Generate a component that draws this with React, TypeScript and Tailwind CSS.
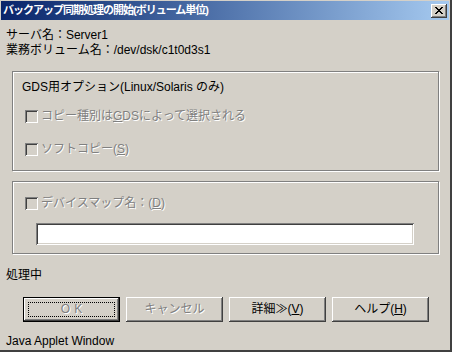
import React from 'react';

const FONT = { fontFamily: '"Liberation Sans", "Noto Sans CJK JP", sans-serif' };

const disabledText = 'text-[#808080] [text-shadow:1px_1px_0_#ffffff]';

const raised =
  'bg-[#d4d0c8] shadow-[inset_-1px_-1px_0_#404040,inset_1px_1px_0_#ffffff,inset_-2px_-2px_0_#808080,inset_2px_2px_0_#d4d0c8]';

const sunken =
  'shadow-[inset_1px_1px_0_#808080,inset_-1px_-1px_0_#ffffff,inset_2px_2px_0_#404040,inset_-2px_-2px_0_#d4d0c8]';

const CheckRow: React.FC<{ children: React.ReactNode }> = ({ children }) => (
  <div className="flex items-center h-[13px] gap-[3px]">
    <span className={`w-[13px] h-[13px] bg-[#d4d0c8] ${sunken}`} />
    <span className={`text-[12px] leading-[15px] ${disabledText}`}>{children}</span>
  </div>
);

const GroupBox: React.FC<{ className?: string; children: React.ReactNode }> = ({ className, children }) => (
  <div
    className={`ml-[6px] w-[427px] border border-[#808080] shadow-[1px_1px_0_#ffffff,inset_1px_1px_0_#ffffff] ${className ?? ''}`}
  >
    {children}
  </div>
);

const Button: React.FC<{ children: React.ReactNode; disabled?: boolean; isDefault?: boolean }> = ({
  children,
  disabled,
  isDefault,
}) => (
  <div
    className={`w-[97px] h-[25px] ${isDefault ? 'border border-black' : ''} ${raised} flex items-center justify-center relative text-[12px] ${
      disabled ? disabledText : 'text-black'
    }`}
  >
    {isDefault && <span className="absolute inset-[4px] border border-dotted border-black" />}
    {children}
  </div>
);

export default function App() {
  return (
    <div
      className="w-[452px] h-[352px] bg-[#d4d0c8] flex flex-col pt-px pl-px border-r-2 border-b-2 border-r-[#404040] border-b-[#404040] text-black"
      style={FONT}
    >
      {/* title bar */}
      <div className="h-[19px] mr-px flex items-center justify-between bg-gradient-to-r from-[#0a246a] to-[#a6caf0] pl-[2px] pr-[2px]">
        <span className="text-white font-bold text-[11px] leading-[15px] tracking-[-1px]">
          バックアップ同期処理の開始(ボリューム単位)
        </span>
        <div className={`w-[16px] h-[14px] ${raised} flex items-center justify-center`}>
          <svg width="8" height="7" viewBox="0 0 8 7">
            <path d="M0 0h2v1h1v1h2V1h1V0h2v1H7v1H6v1H5v1h1v1h1v1h1v1H6V6H5V5H3v1H2v1H0V6h1V5h1V4h1V3H2V2H1V1H0z" fill="#000" />
          </svg>
        </div>
      </div>

      {/* body */}
      <div className="flex flex-col pl-[5px] pt-[8px] text-[12px] leading-[15px]">
        <div>サーバ名：Server1</div>
        <div>業務ボリューム名：/dev/dsk/c1t0d3s1</div>

        <GroupBox className="mt-[13px] h-[100px] pt-[8px] pl-[9px]">
          <div>GDS用オプション(Linux/Solaris のみ)</div>
          <div className="pl-[3px] mt-[15px] flex flex-col gap-[20px]">
            <CheckRow>
              コピー種別は<u>G</u>DSによって選択される
            </CheckRow>
            <CheckRow>
              ソフトコピー(<u>S</u>)
            </CheckRow>
          </div>
        </GroupBox>

        <GroupBox className="mt-[10px] h-[73px] pt-[15px] pl-[12px]">
          <CheckRow>
            デバイスマップ名：(<u>D</u>)
          </CheckRow>
          <div className={`mt-[13px] ml-[11px] w-[378px] h-[22px] bg-white ${sunken}`} />
        </GroupBox>

        <div className="mt-[14px]">処理中</div>

        <div className="mt-[14px] ml-[17px] flex gap-[6px]">
          <Button disabled isDefault>
            <span className="tracking-[4px] pl-[4px]">OK</span>
          </Button>
          <Button disabled>キャンセル</Button>
          <Button>
            詳細≫(<u>V</u>)
          </Button>
          <Button>
            ヘルプ(<u>H</u>)
          </Button>
        </div>

        <div className="mt-[12px]">Java Applet Window</div>
      </div>
    </div>
  );
}
